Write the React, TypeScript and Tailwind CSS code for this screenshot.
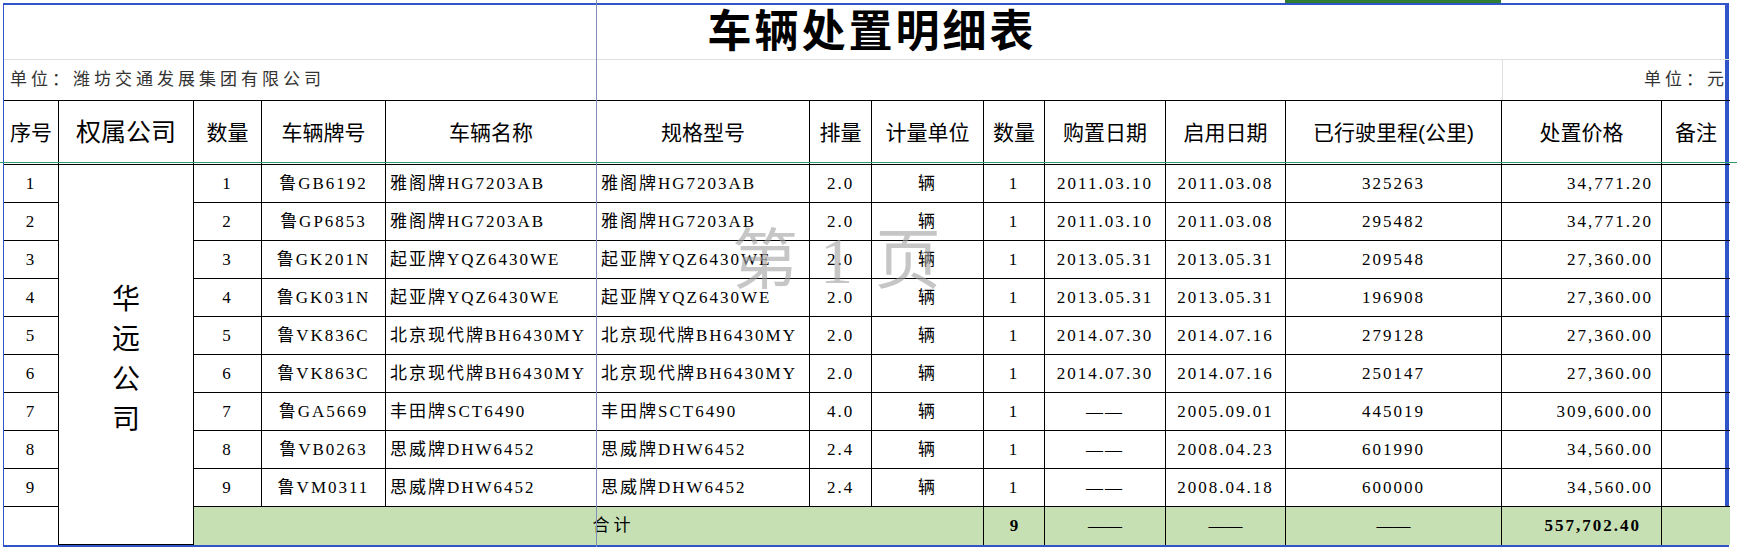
import React from "react";

const cols = "55px 135px 68px 124px 211px 213px 62px 112px 61px 121px 120px 216px 160px 68px";
const rows = [
  ["1","鲁GB6192","雅阁牌HG7203AB","雅阁牌HG7203AB","2.0","2011.03.10","2011.03.08","325263","34,771.20"],
  ["2","鲁GP6853","雅阁牌HG7203AB","雅阁牌HG7203AB","2.0","2011.03.10","2011.03.08","295482","34,771.20"],
  ["3","鲁GK201N","起亚牌YQZ6430WE","起亚牌YQZ6430WE","2.0","2013.05.31","2013.05.31","209548","27,360.00"],
  ["4","鲁GK031N","起亚牌YQZ6430WE","起亚牌YQZ6430WE","2.0","2013.05.31","2013.05.31","196908","27,360.00"],
  ["5","鲁VK836C","北京现代牌BH6430MY","北京现代牌BH6430MY","2.0","2014.07.30","2014.07.16","279128","27,360.00"],
  ["6","鲁VK863C","北京现代牌BH6430MY","北京现代牌BH6430MY","2.0","2014.07.30","2014.07.16","250147","27,360.00"],
  ["7","鲁GA5669","丰田牌SCT6490","丰田牌SCT6490","4.0","——","2005.09.01","445019","309,600.00"],
  ["8","鲁VB0263","思威牌DHW6452","思威牌DHW6452","2.4","——","2008.04.23","601990","34,560.00"],
  ["9","鲁VM0311","思威牌DHW6452","思威牌DHW6452","2.4","——","2008.04.18","600000","34,560.00"],
];
const serif = { fontFamily: '"Liberation Serif","Noto Sans CJK SC",serif' };
const sans = { fontFamily: '"Liberation Sans","Noto Sans CJK SC",sans-serif' };
const c = "border-r border-b border-black flex items-center text-[17px] tracking-[2px] text-black whitespace-nowrap";

export default function App() {
  return (
    <div className="relative w-[1737px] h-[547px] bg-white overflow-hidden" style={serif}>
      <div className="h-[3px] flex">
        <div className="w-[1285px]" />
        <div className="w-[216px] bg-[#2e7d32]" />
      </div>
      <div className="ml-[3px] w-[1726px] border-t-2 border-l border-[#2f55c8] border-r-[4px] border-b-[4px]">
        <div className="grid" style={{ gridTemplateColumns: cols, gridTemplateRows: "55px 40px 65px repeat(10, 38px)" }}>
          <div className="col-span-14 flex items-center justify-center text-[44px] font-bold border-b border-[#e0e0e0]" style={sans}>
            <span className="ml-[10px] tracking-[3px]">车辆处置明细表</span>
          </div>
          <div className="col-span-12 flex items-center pl-[6px] text-[17px] tracking-[4px] text-[#333]" style={serif}>单位：潍坊交通发展集团有限公司</div>
          <div className="col-span-2 flex items-center justify-end pr-[2px] text-[17px] tracking-[4px] text-[#333] border-l border-[#e0e0e0]">单位：元</div>
          {["序号","权属公司","数量","车辆牌号","车辆名称","规格型号","排量","计量单位","数量","购置日期","启用日期","已行驶里程(公里)","处置价格","备注"].map((h, i) => (
            <div key={i} className={`border-r border-b border-black border-t flex items-center justify-center ${i === 1 ? "text-[25px]" : "text-[21px]"} ${i===13?"border-r-0":""}`} style={sans}>{h}</div>
          ))}
          {rows.map((r, ri) => (
            <React.Fragment key={ri}>
              <div className={`${c} justify-center text-[15px]`}>{r[0]}</div>
              {ri === 0 && (
                <div className="border-r border-b border-black row-span-10 flex flex-col items-center justify-center gap-[8px] text-[28px] pt-[10px]" style={sans}>
                  {"华远公司".split("").map((ch) => <span key={ch} className="leading-[32px]">{ch}</span>)}
                </div>
              )}
              <div className={`${c} justify-center`}>{r[0]}</div>
              <div className={`${c} justify-center`}>{r[1]}</div>
              <div className={`${c} pl-[4px]`}>{r[2]}</div>
              <div className={`${c} pl-[4px]`}>{r[3]}</div>
              <div className={`${c} justify-center`}>{r[4]}</div>
              <div className={`${c} justify-center`}>辆</div>
              <div className={`${c} justify-center`}>1</div>
              <div className={`${c} justify-center`}>{r[5]}</div>
              <div className={`${c} justify-center`}>{r[6]}</div>
              <div className={`${c} justify-center`}>{r[7]}</div>
              <div className={`${c} justify-end pr-[8px]`}>{r[8]}</div>
              <div className="border-b border-black" />
            </React.Fragment>
          ))}
          <div className="border-r border-black" />
          <div className="col-span-6 bg-[#c6e0b4] border-r border-black flex items-center justify-center text-[17px] tracking-[4px] pl-[50px]">合计</div>
          <div className="bg-[#c6e0b4] border-r border-black flex items-center justify-center text-[17px] font-bold">9</div>
          <div className="bg-[#c6e0b4] border-r border-black flex items-center justify-center text-[17px]">——</div>
          <div className="bg-[#c6e0b4] border-r border-black flex items-center justify-center text-[17px]">——</div>
          <div className="bg-[#c6e0b4] border-r border-black flex items-center justify-center text-[17px]">——</div>
          <div className="bg-[#c6e0b4] border-r border-black flex items-center justify-end pr-[20px] text-[17px] font-bold tracking-[2px]">557,702.40</div>
          <div className="bg-[#c6e0b4]" />
        </div>
      </div>
      <div className="absolute left-[596px] top-0 w-px h-full bg-[#7f8fb8]" />
      <div className="absolute left-0 top-[162px] w-full h-px bg-[#2e9e6e]" />
      <div className="absolute left-[732px] top-[228px] text-[66px] leading-none text-[#a0a0a0]/60 tracking-[22px] pointer-events-none" style={serif}>第1页</div>
    </div>
  );
}
